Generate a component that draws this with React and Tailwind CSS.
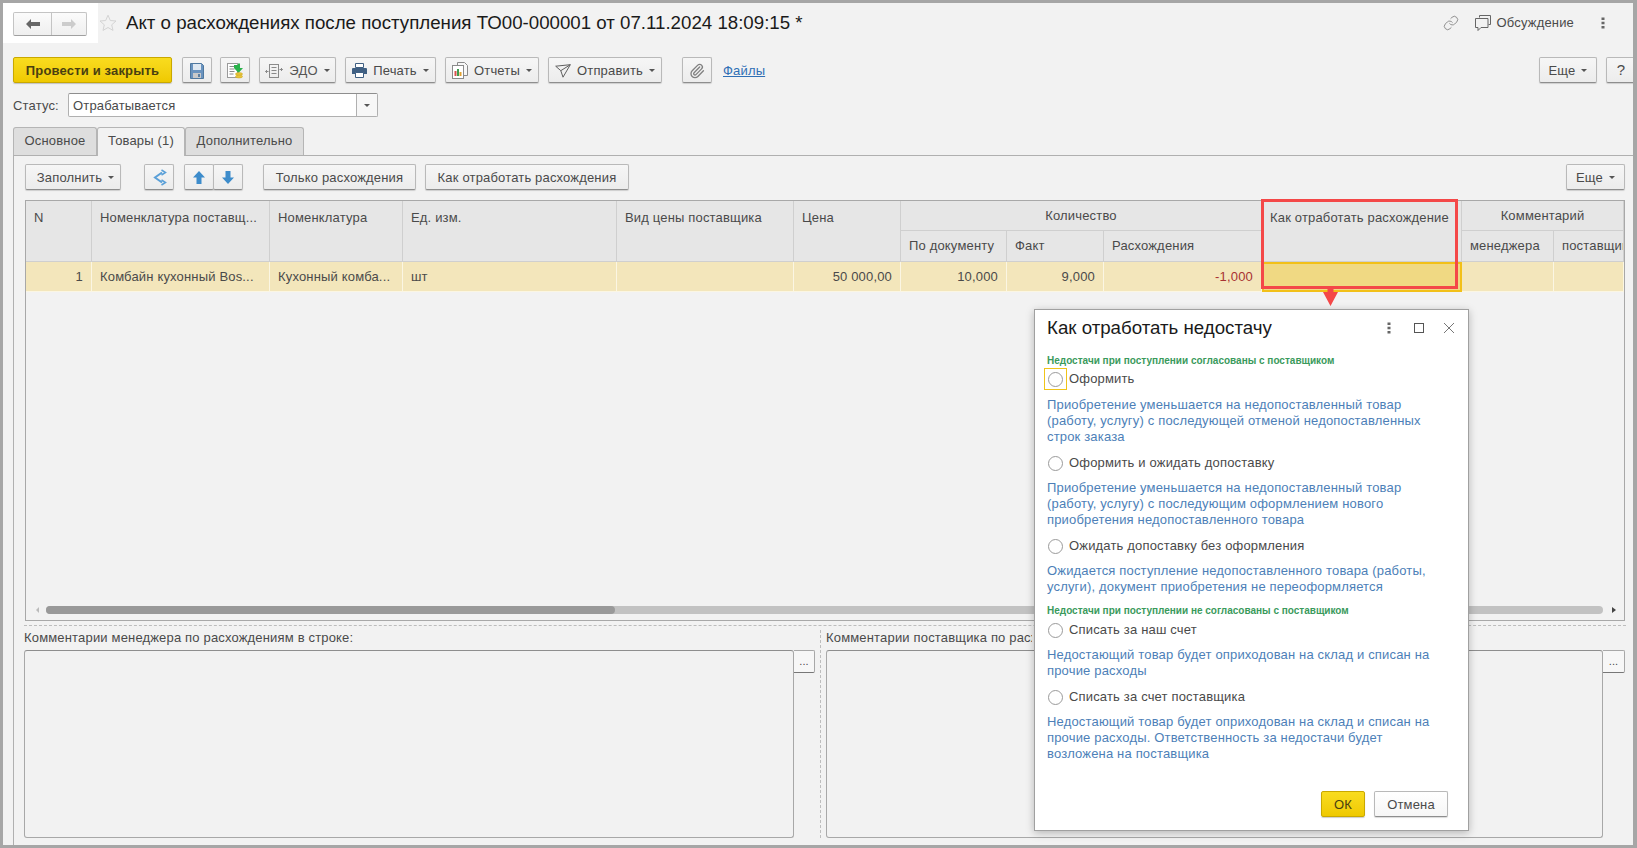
import { Paperclip, Link } from 'lucide-react'

const caret = <span className="inline-block ml-[6px] w-0 h-0 border-x-[3px] border-x-transparent border-t-[3px] border-t-[#555] align-middle"></span>

function Btn({ w, className = '', children }) {
    return (
        <div className={`h-[26px] pt-[1px] shrink-0 flex items-center justify-center rounded-[2px] border border-[#b9b9b9] border-b-[#8e8e8e] bg-gradient-to-b from-[#f6f6f6] to-[#ececec] shadow-[0_1px_1px_rgba(0,0,0,0.15)] text-[13px] text-[#4a4a4a] whitespace-nowrap ${w} ${className}`}>
            {children}
        </div>
    )
}

function SaveIcon() {
    return (
        <svg width="14" height="16" viewBox="0 0 14 16">
            <path d="M0.5 0.5h11l2 2v13h-13z" fill="#6a93bf" stroke="#4f789f" />
            <rect x="3" y="1" width="8" height="6" fill="#dfe8f1" />
            <rect x="3" y="10" width="8" height="5" fill="#c9c9c9" />
            <rect x="8" y="11" width="2" height="3" fill="#5c7fa3" />
        </svg>
    )
}

function PostIcon() {
    return (
        <svg width="18" height="18" viewBox="0 0 18 18">
            <rect x="1.5" y="1.5" width="10" height="14" fill="#fff" stroke="#9a9a9a" />
            <path d="M3.5 4.5h6M3.5 7h5M3.5 9.5h5M3.5 12h4" stroke="#8a8a8a" />
            <path d="M8 2h4V0.5h2V5h3l-4.5 5L8 5z" fill="#29b24a" transform="translate(0 1)" />
            <ellipse cx="13" cy="12" rx="3.5" ry="1.5" fill="#e8c53a" stroke="#c9a320" strokeWidth="0.5" />
            <ellipse cx="13" cy="14.5" rx="3.5" ry="1.5" fill="#e8c53a" stroke="#c9a320" strokeWidth="0.5" />
        </svg>
    )
}

function EdoIcon() {
    return (
        <svg width="18" height="16" viewBox="0 0 18 16" fill="none" stroke="#8a8a8a">
            <rect x="4.5" y="1.5" width="9" height="13" />
            <path d="M6.5 4.5h5M6.5 7.5h5M6.5 10.5h5M0.5 8.5h3M2 7l-1.5 1.5L2 10M14.5 6.5h3M16 5l1.5 1.5L16 8" />
        </svg>
    )
}

function PrintIcon() {
    return (
        <svg width="15" height="15" viewBox="0 0 15 15">
            <path d="M3.5 0.5h8v4h-8z" fill="#fff" stroke="#3f5f82" />
            <path d="M1 5h13a1 1 0 0 1 1 1v5h-15v-5a1 1 0 0 1 1-1z" fill="#3f5f82" />
            <path d="M3.5 9.5h8v5h-8z" fill="#fff" stroke="#3f5f82" />
        </svg>
    )
}

function ReportIcon() {
    return (
        <svg width="16" height="17" viewBox="0 0 16 17">
            <path d="M5.5 0.5h7l3 3v10h-10z" fill="#f7f7f7" stroke="#8a8a8a" />
            <rect x="0.5" y="3.5" width="11" height="13" fill="#fff" stroke="#8a8a8a" />
            <rect x="2.5" y="9" width="2" height="5" fill="#d9534f" />
            <rect x="5" y="7" width="2" height="7" fill="#3f9c4d" />
            <rect x="7.5" y="10" width="2" height="4" fill="#e0a030" />
        </svg>
    )
}

function SendIcon() {
    return (
        <svg width="16" height="14" viewBox="0 0 16 14" fill="none" stroke="#5f5f5f">
            <path d="M0.7 2.2 15.3 0.7 8 13.2 5.8 6.7zM5.8 6.7 15.3 0.7" />
        </svg>
    )
}

function ShareIcon() {
    return (
        <svg width="17" height="17" viewBox="0 0 17 17" fill="none" stroke="#5aa0d8" strokeWidth="2">
            <path d="M11 3.5 4 8.5l7 5" />
            <path d="M10.5 1l4 2.5-4 2.5M10.5 11l4 2.5-4 2.5" strokeWidth="1.5" />
        </svg>
    )
}

function ArrowV({ down }) {
    return (
        <svg width="12" height="13" viewBox="0 0 12 13" className={down ? 'rotate-180' : ''}>
            <path d="M6 0 12 6.5H8.500V13h-5V6.500H0z" fill="#3d8ccb" />
        </svg>
    )
}

function ChatIcon() {
    return (
        <svg width="16" height="16" viewBox="0 0 16 16" fill="none" stroke="#666">
            <path d="M4.5 2.5v-2h11v9h-2" />
            <path d="M0.5 3.5h12.500v9H6l-3 3v-3H0.500z" />
        </svg>
    )
}

function Radio({ focus }) {
    return (
        <div className={`w-[23px] h-[22px] flex items-center justify-center ${focus ? 'border border-[#f0c419]' : ''}`}>
            <div className="w-[15px] h-[15px] rounded-full border border-[#9a9a9a] bg-white"></div>
        </div>
    )
}

function Option({ label, lines, focus, first }) {
    return (
        <>
            <div className={`flex items-center h-[22px] text-[13px] text-[#4a4a4a] -ml-[3px] ${first ? 'mt-[1px]' : 'mt-[7px]'}`}>
                <Radio focus={focus} />
                <span className="ml-[2px]">{label}</span>
            </div>
            <div className={`text-[13px] leading-[16px] text-[#4d7fb8] whitespace-nowrap ${focus ? 'mt-[7px]' : 'mt-[6px]'}`}>
                {lines.map((l) => <div key={l}>{l}</div>)}
            </div>
        </>
    )
}

const head = 'bg-[#e6e6e6] border-r border-b border-[#cfcfcf] px-2 text-[13px] text-[#4a4a4a] whitespace-nowrap overflow-hidden'
const cell = 'bg-[#f3e6bb] border-r border-b border-[#fbf6e3] px-2 text-[13px] text-[#4a4a4a] whitespace-nowrap overflow-hidden flex items-center'

export default function App() {
    return (
        <div className="relative w-[1637px] h-[848px] overflow-hidden flex flex-col bg-[#f2f2f2] border-t-[3px] border-b-[3px] border-l-[3px] border-r-[4px] border-[#a6a6a6] tracking-[0.17px] font-['Liberation_Sans',Arial,sans-serif]">
            {/* top bar */}
            <div className="h-[40px] shrink-0 flex items-center">
                <div className="w-[95px] h-[40px] bg-white pl-[10px] pt-[9px]">
                    <div className="w-[74px] h-[24px] flex rounded-[2px] border border-[#c4c4c4] border-b-[#a0a0a0] bg-gradient-to-b from-[#fbfbfb] to-[#efefef]">
                        <div className="w-[38px] flex items-center justify-center border-r border-[#c4c4c4]">
                            <svg width="14" height="10" viewBox="0 0 14 10"><path d="M5 0v3h9v4H5v3L0 5z" fill="#666" /></svg>
                        </div>
                        <div className="flex-1 flex items-center justify-center">
                            <svg width="14" height="10" viewBox="0 0 14 10"><path d="M9 0v3H0v4h9v3l5-5z" fill="#ccc" /></svg>
                        </div>
                    </div>
                </div>
                <svg width="18" height="18" viewBox="0 0 18 18" className="ml-[1px]">
                    <path d="M9 1.200l2.300 5.300 5.700.5-4.300 3.800 1.300 5.600L9 13.500l-5 2.900 1.300-5.600L1 7l5.700-.5z" fill="none" stroke="#d4d4d4" />
                </svg>
                <h1 className="ml-[9px] text-[18.7px] tracking-normal font-normal text-[#1a1a1a] whitespace-nowrap">Акт о расхождениях после поступления ТО00-000001 от 07.11.2024 18:09:15 *</h1>
                <div className="ml-auto flex items-center pr-[28px] text-[13px] text-[#4a4a4a]">
                    <Link size={16} strokeWidth={1.2} color="#777" />
                    <div className="ml-[16px]"><ChatIcon /></div>
                    <span className="ml-[6px]">Обсуждение</span>
                    <svg width="4" height="12" viewBox="0 0 4 12" className="ml-[27px]"><path d="M0.5 0.5h3V3h-3zM0.5 4.7h3v2.500h-3zM0.5 9h3v2.500h-3z" fill="#666" /></svg>
                </div>
            </div>

            {/* main toolbar */}
            <div className="mt-[14px] ml-[10px] flex items-center">
                <div className="w-[159px] h-[26px] pt-[1px] flex items-center justify-center rounded-[2px] border border-[#c9a800] bg-gradient-to-b from-[#f9dc1e] to-[#efc900] font-bold text-[13px] text-[#4a3f10] shadow-[0_1px_1px_rgba(0,0,0,0.2)]">Провести и закрыть</div>
                <Btn w="w-[30px]" className="ml-[10px]"><SaveIcon /></Btn>
                <Btn w="w-[30px]" className="ml-[8px]"><PostIcon /></Btn>
                <Btn w="w-[77px]" className="ml-[9px] text-[#555]"><EdoIcon /><span className="ml-[6px]">ЭДО</span>{caret}</Btn>
                <Btn w="w-[91px]" className="ml-[9px]"><PrintIcon /><span className="ml-[6px]">Печать</span>{caret}</Btn>
                <Btn w="w-[94px]" className="ml-[9px]"><ReportIcon /><span className="ml-[6px]">Отчеты</span>{caret}</Btn>
                <Btn w="w-[114px]" className="ml-[9px]"><SendIcon /><span className="ml-[6px]">Отправить</span>{caret}</Btn>
                <Btn w="w-[30px]" className="ml-[20px]"><Paperclip size={16} strokeWidth={2} color="#808080" /></Btn>
                <a className="ml-[11px] pt-[1px] text-[13px] text-[#2f6fb5] underline">Файлы</a>
                <Btn w="w-[58px]" className="ml-auto">Еще{caret}</Btn>
                <Btn w="w-[30px]" className="ml-[9px] -mr-[3px] text-[15px]">?</Btn>
            </div>

            {/* status */}
            <div className="mt-[10px] ml-[10px] h-[24px] flex items-center text-[13px] text-[#4a4a4a]">
                <span className="w-[55px] pt-[2px]">Статус:</span>
                <div className="w-[310px] h-[24px] flex rounded-[2px] border border-[#b0b0b0] border-t-[#8e8e8e] bg-white">
                    <div className="flex-1 pl-[4px] pt-[1px] flex items-center">Отрабатывается</div>
                    <div className="w-[21px] flex items-center justify-center border-l border-[#b0b0b0] bg-[#f7f7f7]">
                        <span className="w-0 h-0 border-x-[3px] border-x-transparent border-t-[3px] border-t-[#555]"></span>
                    </div>
                </div>
            </div>

            {/* tabs */}
            <div className="mt-[10px] ml-[10px] h-[28px] flex items-stretch text-[13px] text-[#4a4a4a]">
                <div className="w-[84px] pb-[2px] rounded-t-[3px] border border-b-0 border-[#b5b5b5] bg-[#dedede] flex items-center justify-center">Основное</div>
                <div className="relative z-10 w-[88px] h-[29px] pb-[3px] rounded-t-[3px] border border-b-0 border-[#b5b5b5] bg-[#f2f2f2] flex items-center justify-center">Товары (1)</div>
                <div className="w-[119px] pb-[2px] rounded-t-[3px] border border-b-0 border-[#b5b5b5] bg-[#dedede] flex items-center justify-center">Дополнительно</div>
            </div>

            {/* tab panel */}
            <div className="flex-1 min-h-0 ml-[10px] border-t border-l border-[#b0b0b0] pl-[11px] pt-[8px] flex flex-col">
                <div className="flex items-center pr-[8px]">
                    <Btn w="w-[96px]" className="pl-[5px]">Заполнить{caret}</Btn>
                    <Btn w="w-[30px]" className="ml-[23px]"><ShareIcon /></Btn>
                    <Btn w="w-[30px]" className="ml-[10px]"><ArrowV /></Btn>
                    <Btn w="w-[30px]" className="-ml-[1px]"><ArrowV down /></Btn>
                    <Btn w="w-[153px]" className="ml-[20px]">Только расхождения</Btn>
                    <Btn w="w-[204px]" className="ml-[9px]">Как отработать расхождения</Btn>
                    <Btn w="w-[59px]" className="ml-auto">Еще{caret}</Btn>
                </div>

                {/* table */}
                <div className="relative mt-[10px] w-[1600px] h-[421px] shrink-0 border border-[#a8a8a8] flex flex-col overflow-hidden">
                    <div className="grid grid-cols-[66px_178px_133px_214px_177px_107px_106px_97px_158px_200px_92px_70px] grid-rows-[30px_31px_30px]">
                        <div className={`${head} row-span-2 pt-[7px]`}>N</div>
                        <div className={`${head} row-span-2 pt-[7px]`}>Номенклатура поставщ...</div>
                        <div className={`${head} row-span-2 pt-[7px]`}>Номенклатура</div>
                        <div className={`${head} row-span-2 pt-[7px]`}>Ед. изм.</div>
                        <div className={`${head} row-span-2 pt-[7px]`}>Вид цены поставщика</div>
                        <div className={`${head} row-span-2 pt-[7px]`}>Цена</div>
                        <div className={`${head} col-span-3 flex items-center justify-center`}>Количество</div>
                        <div className={`${head} row-span-2 pt-[7px]`}>Как отработать расхождение</div>
                        <div className={`${head} col-span-2 flex items-center justify-center`}>Комментарий</div>
                        <div className={`${head} flex items-center`}>По документу</div>
                        <div className={`${head} flex items-center`}>Факт</div>
                        <div className={`${head} flex items-center`}>Расхождения</div>
                        <div className={`${head} flex items-center`}>менеджера</div>
                        <div className={`${head} flex items-center`}>поставщик</div>

                        <div className={`${cell} justify-end`}>1</div>
                        <div className={cell}>Комбайн кухонный Bos...</div>
                        <div className={cell}>Кухонный комба...</div>
                        <div className={cell}>шт</div>
                        <div className={cell}></div>
                        <div className={`${cell} justify-end`}>50 000,00</div>
                        <div className={`${cell} justify-end`}>10,000</div>
                        <div className={`${cell} justify-end`}>9,000</div>
                        <div className={`${cell} justify-end text-[#a83232]`}>-1,000</div>
                        <div className="bg-[#f0d983] border-2 border-[#f2c018]"></div>
                        <div className={cell}></div>
                        <div className={cell}></div>
                    </div>

                    {/* scrollbar */}
                    <div className="mt-auto mb-[6px] h-[8px] flex items-center pl-[10px] pr-[8px]">
                        <span className="w-0 h-0 border-y-[3px] border-y-transparent border-r-[3px] border-r-[#bbb]"></span>
                        <div className="ml-[7px] flex-1 h-[8px] rounded-full bg-[#c2c2c2]">
                            <div className="w-[569px] h-[8px] rounded-full bg-[#999]"></div>
                        </div>
                        <span className="ml-[9px] w-0 h-0 border-y-[3px] border-y-transparent border-l-[4px] border-l-[#444]"></span>
                    </div>
                </div>

                <div className="mt-[4px] mr-[7px] -ml-[1px] border-t border-dashed border-[#bdbdbd]"></div>

                {/* comments */}
                <div className="mt-[4px] -ml-[1px] flex flex-1 min-h-0 mb-[7px] text-[13px] text-[#4a4a4a]">
                    <div className="w-[797px] pr-[5px] flex flex-col border-r border-dashed border-[#bdbdbd]">
                        <div className="h-[16px] leading-[16px] whitespace-nowrap">Комментарии менеджера по расхождениям в строке:</div>
                        <div className="mt-[4px] flex flex-1">
                            <div className="w-[770px] rounded-[3px] border border-[#a8a8a8] border-t-[#8e8e8e]"></div>
                            <div className="w-[21px] h-[23px] rounded-r-[2px] border border-l-0 border-[#a8a8a8] border-b-[#777] text-[11px] flex items-center justify-center bg-[#f7f7f7]">...</div>
                        </div>
                    </div>
                    <div className="pl-[5px] flex flex-col">
                        <div className="w-[206px] h-[16px] leading-[16px] whitespace-nowrap overflow-hidden">Комментарии поставщика по расхождениям в строке:</div>
                        <div className="mt-[4px] flex flex-1">
                            <div className="w-[777px] rounded-[3px] border border-[#a8a8a8] border-t-[#8e8e8e]"></div>
                            <div className="w-[22px] h-[23px] rounded-r-[2px] border border-l-0 border-[#a8a8a8] border-b-[#777] text-[11px] flex items-center justify-center bg-[#f7f7f7]">...</div>
                        </div>
                    </div>
                </div>
            </div>

            {/* red highlight over the column */}
            <div className="absolute left-[1258px] top-[196px] w-[197px] h-[90px] border-[3px] border-[#f44848]"></div>
            <svg width="15" height="17" viewBox="0 0 15 17" className="absolute left-[1320px] top-[286px]">
                <path d="M4.5 0h6v3H15L7.5 17 0 3h4.5z" fill="#f44848" />
            </svg>

            {/* dialog */}
            <div className="absolute left-[1031px] top-[306px] w-[435px] h-[522px] px-[12px] bg-white border border-[#a0a0a0] shadow-[0_2px_8px_rgba(0,0,0,0.25)] flex flex-col">
                <div className="h-[36px] shrink-0 flex items-center">
                    <span className="text-[18.7px] tracking-normal text-[#1a1a1a] whitespace-nowrap">Как отработать недостачу</span>
                    <svg width="4" height="12" viewBox="0 0 4 12" className="ml-auto mr-[23px]"><path d="M0.5 0.5h3V3h-3zM0.5 4.7h3v2.500h-3zM0.5 9h3v2.500h-3z" fill="#666" /></svg>
                    <div className="w-[10px] h-[10px] border border-[#555] mr-[20px]"></div>
                    <svg width="10" height="10" viewBox="0 0 10 10" className="mr-[2px]"><path d="M0 0l10 10M10 0 0 10" stroke="#777" /></svg>
                </div>
                <div className="mt-[9px] h-[12px] leading-[12px] text-[10px] tracking-normal font-bold text-[#3a9a5c] whitespace-nowrap">Недостачи при поступлении согласованы с поставщиком</div>
                <Option first focus label="Оформить" lines={['Приобретение уменьшается на недопоставленный товар', '(работу, услугу) с последующей отменой недопоставленных', 'строк заказа']} />
                <Option label="Оформить и ожидать допоставку" lines={['Приобретение уменьшается на недопоставленный товар', '(работу, услугу) с последующим оформлением нового', 'приобретения недопоставленного товара']} />
                <Option label="Ожидать допоставку без оформления" lines={['Ожидается поступление недопоставленного товара (работы,', 'услуги), документ приобретения не переоформляется']} />
                <div className="mt-[10px] mb-[1px] h-[12px] leading-[12px] text-[10px] tracking-normal font-bold text-[#3a9a5c] whitespace-nowrap">Недостачи при поступлении не согласованы с поставщиком</div>
                <Option first label="Списать за наш счет" lines={['Недостающий товар будет оприходован на склад и списан на', 'прочие расходы']} />
                <Option label="Списать за счет поставщика" lines={['Недостающий товар будет оприходован на склад и списан на', 'прочие расходы. Ответственность за недостачи будет', 'возложена на поставщика']} />
                <div className="mt-auto mb-[13px] flex justify-end pr-[8px]">
                    <div className="w-[44px] h-[26px] pt-[1px] flex items-center justify-center rounded-[2px] border border-[#c9a800] bg-gradient-to-b from-[#f9dc1e] to-[#efc900] text-[13px] text-[#4a3f10] shadow-[0_1px_1px_rgba(0,0,0,0.2)]">ОК</div>
                    <Btn w="w-[74px]" className="ml-[9px] from-[#ffffff] to-[#f6f6f6]">Отмена</Btn>
                </div>
            </div>
        </div>
    )
}
